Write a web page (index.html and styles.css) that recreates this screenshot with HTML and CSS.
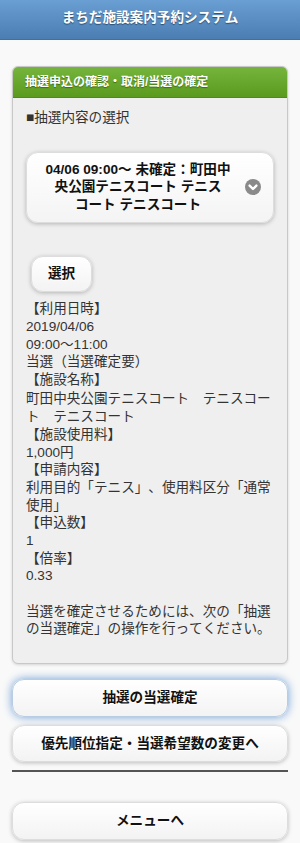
FILE: index.html
```html
<!DOCTYPE html>
<html lang="ja">
<head>
    <meta charset="UTF-8">
    <meta name="viewport" content="width=device-width, initial-scale=1.0">
    <title>まちだ施設案内予約システム</title>
    <link rel="stylesheet" href="styles.css">
</head>
<body>
    <div class="header">
        <h1>まちだ施設案内予約システム</h1>
    </div>

    <div class="content">
        <div class="card">
            <div class="card-head">抽選申込の確認・取消/当選の確定</div>
            <div class="card-body">
                <p class="label">■抽選内容の選択</p>

                <div class="select-btn">
                    <span>04/06 09:00～ 未確定：町田中央公園テニスコート テニスコート テニスコート</span>
                    <svg class="chev" width="16" height="16" viewBox="0 0 16 16">
                        <circle cx="8" cy="8" r="8" fill="#8a8a8a"/>
                        <path d="M4.6 6.6 L8 10 L11.4 6.6" fill="none" stroke="#fff" stroke-width="2.4" stroke-linecap="round" stroke-linejoin="round"/>
                    </svg>
                </div>

                <button class="btn small">選択</button>

                <p class="detail">
                    【利用日時】<br>
                    2019/04/06<br>
                    09:00～11:00<br>
                    当選（当選確定要）<br>
                    【施設名称】<br>
                    <span class="ja">町田中央公園テニスコート　テニスコート　テニスコート</span><br>
                    【施設使用料】<br>
                    1,000円<br>
                    【申請内容】<br>
                    利用目的「テニス」、使用料区分「通常使用」<br>
                    【申込数】<br>
                    1<br>
                    【倍率】<br>
                    0.33<br>
                    <br>
                    当選を確定させるためには、次の「抽選の当選確定」の操作を行ってください。
                </p>
            </div>
        </div>

        <button class="btn wide focus">抽選の当選確定</button>
        <button class="btn wide">優先順位指定・当選希望数の変更へ</button>
        <hr>
        <button class="btn wide menu">メニューへ</button>
    </div>
</body>
</html>
```

FILE: styles.css
```css
body { margin: 0; background: #f9f9f9; font-family: "Liberation Sans", "Noto Sans CJK JP", sans-serif; font-size: 13.6px; line-height: 1.3; color: #333; text-spacing-trim: space-all; line-break: strict; font-kerning: none; }

.header { height: 39px; border-bottom: 1px solid #456f9a; background: linear-gradient(#6a9fd3, #4b7db2); display: flex; align-items: center; justify-content: center; }
.header h1 { margin: 0 0 4px; font-size: 13.6px; font-weight: bold; color: #fff; text-shadow: 0 1px 1px #2a4d70; }

.content { padding: 26px 12px 0 12px; }

.card { border: 1px solid #c8c8c8; border-radius: 6px; background: #efefef; box-shadow: 0 1px 3px rgba(0,0,0,.15); overflow: hidden; }
.card-head { height: 30px; line-height: 30px; padding: 0 12px; background: linear-gradient(#76b53d, #5a9a1e); color: #fff; font-weight: bold; font-size: 12px; text-shadow: 0 1px 1px #3d6b12; }
.card-body { padding: 11px 13px 25px 13px; border-top: 1px solid #4e8a18; }

.label { margin: 0; color: #333; }

.select-btn { margin: 25px 0 0 0; padding: 8px 40px 8px 16px; border: 1px solid #ddd; border-radius: 12px; background: linear-gradient(#fff, #f4f4f4); box-shadow: 0 1px 4px rgba(0,0,0,.25); text-align: center; font-weight: bold; color: #111; position: relative; }
.select-btn .chev { position: absolute; right: 12px; top: 50%; margin-top: -8px; }

.btn { display: block; font-family: inherit; font-size: 13.6px; line-height: 1.3; font-weight: bold; color: #111; border: 1px solid #ddd; border-radius: 12px; background: linear-gradient(#fff, #f3f3f3); box-shadow: 0 1px 4px rgba(0,0,0,.25); text-shadow: 0 1px 0 #fff; }
.btn.small { margin: 33px 0 0 5px; padding: 8px 16px 9px; }
.btn.wide { width: 100%; padding: 9px 10px; margin: 0 0 8px 0; }
.btn.focus { margin-top: 15px; box-shadow: 0 0 10px #6f9fd6; border-color: #b8cce4; }
.btn.menu { margin-top: 30px; }

.detail { margin: 8px 0 0 0; color: #333; }
.detail .ja { font-family: "Noto Sans CJK JP", sans-serif; }

hr { margin: 0; border: 0; border-top: 2px solid #555; }
```
